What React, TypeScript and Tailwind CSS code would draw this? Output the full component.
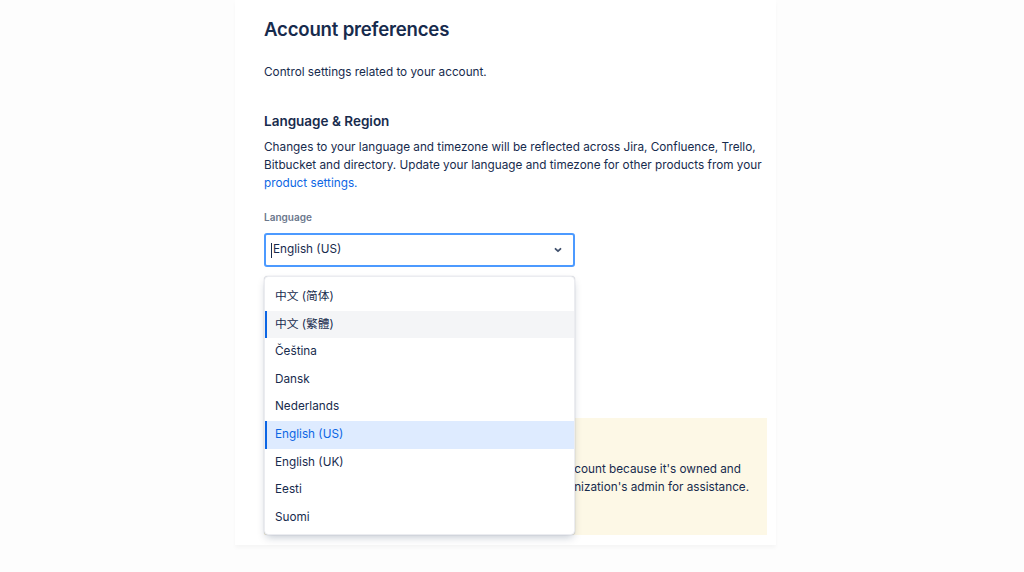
import React from 'react';

const languages = [
  '中文 (简体)',
  '中文 (繁體)',
  'Čeština',
  'Dansk',
  'Nederlands',
  'English (US)',
  'English (UK)',
  'Eesti',
  'Suomi',
];

export default function App() {
  const hovered = '中文 (繁體)';
  const selected = 'English (US)';

  return (
    <div
      className="min-h-screen w-full bg-[#fdfdfd] text-[#172b4d]"
      style={{ fontFamily: 'Inter, "Noto Sans CJK SC", "Noto Sans CJK TC", sans-serif' }}
    >
      <div className="ml-[235px] w-[541px] h-[545px] bg-white pl-[29px] pr-[9px] pt-[16px] shadow-[0_3px_4px_rgba(0,0,0,0.03)]">
        <h1 className="text-[18.6px] font-semibold leading-[26px] tracking-[-0.2px]">Account preferences</h1>

        <p className="mt-[21px] text-[11.75px] leading-[18px]">Control settings related to your account.</p>

        <h2 className="mt-[31px] text-[13.5px] font-semibold leading-[18px]">Language &amp; Region</h2>
        <p className="mt-[8px] text-[11.75px] leading-[18px] w-[503px]">
          Changes to your language and timezone will be reflected across Jira, Confluence, Trello,
          Bitbucket and directory. Update your language and timezone for other products from your{' '}
          <span className="text-[#0c66e4]">product settings.</span>
        </p>

        <div className="mt-[18px] text-[10px] font-semibold leading-[14px] text-[#6b778c]">Language</div>

        <div className="relative mt-[9px] w-[311px]">
          {/* select input */}
          <div className="flex h-[34px] items-center justify-between rounded-[3px] border-2 border-[#4c9aff] bg-white pl-[5px] pr-[10px]">
            <div className="flex items-center text-[11.75px]">
              <span className="mr-[1px] inline-block h-[15px] w-px bg-[#172b4d]" />
              <span>English (US)</span>
            </div>
            <svg width="10" height="10" viewBox="0 0 10 10" fill="none">
              <path d="M2.5 3.8 L5 6.2 L7.5 3.8" stroke="#42526e" strokeWidth="1.8" strokeLinecap="round" strokeLinejoin="round" />
            </svg>
          </div>

          {/* dropdown menu */}
          <div className="absolute left-0 top-[43px] z-10 w-[311px] rounded-[4px] border border-[#ebecf0] bg-white pt-[6px] pb-[3px] shadow-[0_4px_8px_-2px_rgba(9,30,66,0.25),0_0_1px_rgba(9,30,66,0.31)]">
            {languages.map((lang) => {
              const isSel = lang === selected;
              const isHover = lang === hovered;
              return (
                <div
                  key={lang}
                  className={`flex h-[27.6px] items-center border-l-2 pl-[8px] text-[11.75px] ${
                    isSel
                      ? 'border-[#0c66e4] bg-[#deebff] text-[#0c66e4]'
                      : isHover
                      ? 'border-[#0c66e4] bg-[#f4f5f7]'
                      : 'border-transparent'
                  }`}
                >
                  {lang}
                </div>
              );
            })}
          </div>
        </div>

        {/* warning banner */}
        <div className="mt-[151px] flex h-[117px] w-[503px] gap-[12px] bg-[#fdf8e6] pl-[14px] pt-[14px]">
          <svg width="20" height="20" viewBox="0 0 24 24" className="shrink-0">
            <path d="M12 3 L22 20 H2 Z" fill="#ffab00" />
            <rect x="11" y="9" width="2" height="6" rx="1" fill="#172b4d" />
            <circle cx="12" cy="17.2" r="1.1" fill="#172b4d" />
          </svg>
          <div className="text-[11.75px] leading-[18px]">
            <div className="font-semibold">Language can't be changed</div>
            <div className="mt-[10px] whitespace-nowrap">You can't edit your language settings for this account because it's owned and</div>
            <div className="whitespace-nowrap">managed by an organization. Contact your organization's admin for assistance.</div>
          </div>
        </div>
      </div>
    </div>
  );
}
